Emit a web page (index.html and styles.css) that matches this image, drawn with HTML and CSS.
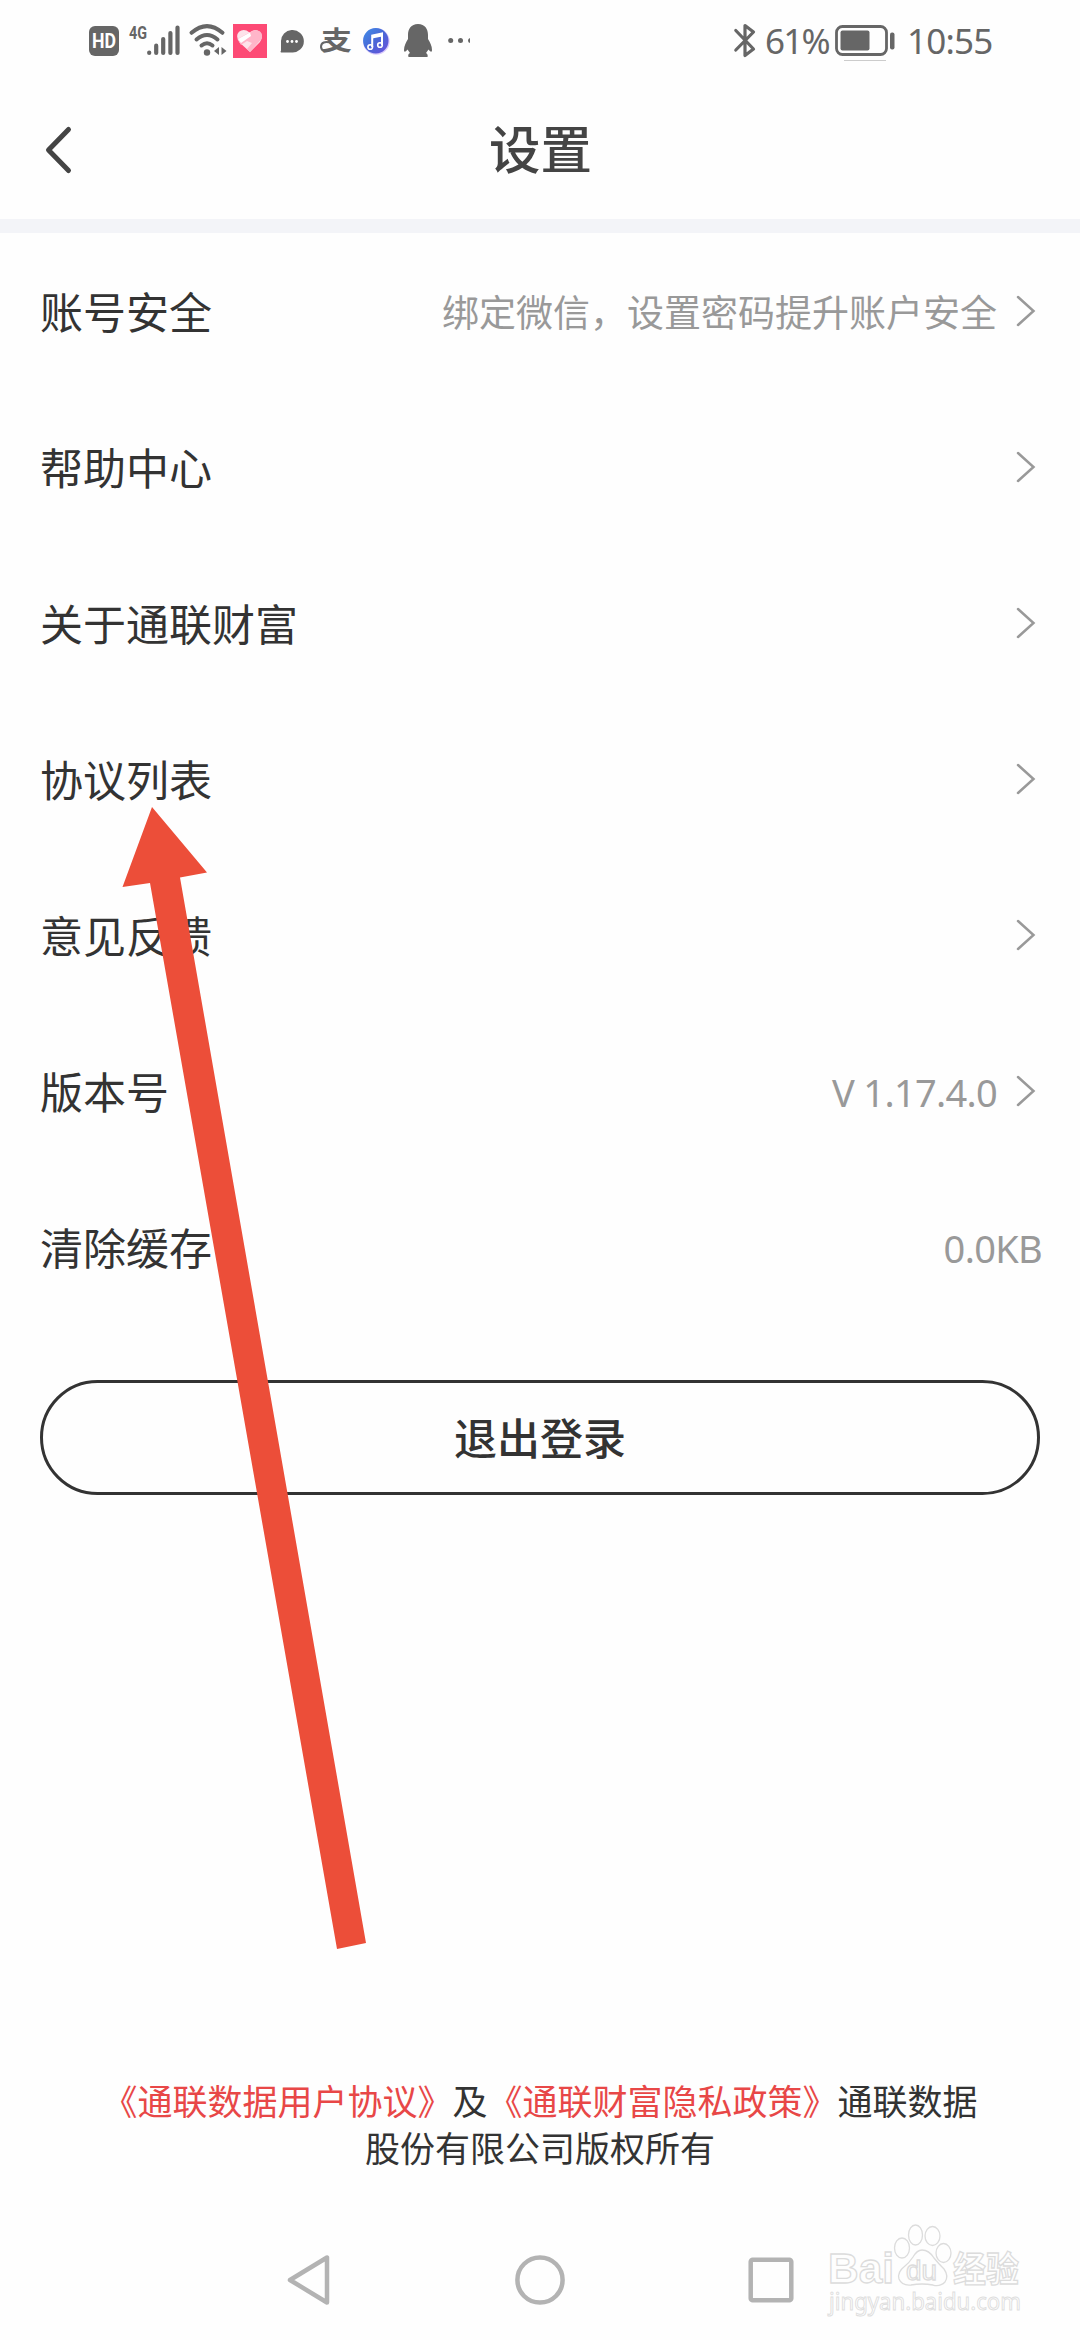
FILE: index.html
```html
<!DOCTYPE html>
<html lang="zh-CN">
<head>
    <meta charset="UTF-8">
    <meta name="viewport" content="width=device-width, initial-scale=1.0">
    <title>设置</title>
    <link rel="stylesheet" href="styles.css">
</head>
<body>
    <div class="screen">
        <!-- Status bar -->
        <div class="status-bar">
            <div class="status-left">
                <svg class="icon-hd" width="30" height="36" viewBox="0 0 30 36">
                    <rect x="0" y="3" width="30" height="30" rx="6" fill="#666"/>
                    <text x="15" y="25" text-anchor="middle" textLength="24" lengthAdjust="spacingAndGlyphs" class="hd-text">HD</text>
                </svg>
                <svg class="icon-signal" width="51" height="36" viewBox="0 0 51 36">
                    <text x="0" y="15.500" textLength="18" lengthAdjust="spacingAndGlyphs" class="net-text">4G</text>
                    <g stroke="#666" stroke-width="4.200" stroke-linecap="round">
                        <path d="M20.200 29.500v.5M27.200 22.700v7.200M34.200 16v14M41.400 10v20M48.500 4.500v25.500"/>
                    </g>
                </svg>
                <svg class="icon-wifi" width="38" height="36" viewBox="0 0 38 36">
                    <g fill="none" stroke="#666" stroke-width="4" stroke-linecap="round">
                        <path d="M2.500 9.800q15.500-13.500 31 0"/>
                        <path d="M7.500 16.500q10.500-9 21 0"/>
                        <path d="M12.500 22.500q5.500-4.500 11 0"/>
                    </g>
                    <circle cx="18" cy="29.500" r="3.200" fill="#666"/>
                    <path d="M30 24v8l-5-4zM32.500 24v8l5-4z" fill="#666"/>
                </svg>
                <svg class="icon-heart" width="34" height="36" viewBox="0 0 34 36">
                    <rect y="1" width="34" height="34" fill="#fd4a75"/>
                    <path d="M17 29L6.500 19.500Q2 13 6 8.800 11 5 16.500 9.500 22 5 26.500 8.500 31 13 27 19z" fill="#fde3ea"/>
                    <path d="M4.500 16L16.500 9.500 22 7q9 1 6.500 9L17 29l-3-3 5-6-5-2-6 4z" fill="#ffb5c9"/>
                    <path d="M17 9.500l-12 6.500 3 4 10-7z" fill="#fff"/>
                </svg>
                <svg class="icon-chat" width="23" height="36" viewBox="0 0 23 36">
                    <path d="M11.500 7A11.300 11.300 0 1 1 11.500 29.500H1q-1-.5 0-2V18A11 11 0 0 1 11.500 7z" fill="#666"/>
                    <g fill="#fff">
                        <circle cx="7.500" cy="18.500" r="1.400"/>
                        <circle cx="12" cy="18.500" r="1.400"/>
                        <circle cx="16.500" cy="18.500" r="1.400"/>
                    </g>
                </svg>
                <svg class="icon-pay" width="32" height="36" viewBox="0 0 32 36">
                    <text x="1" y="27" textLength="31" lengthAdjust="spacingAndGlyphs" class="pay-text">支</text>
                    <path d="M12 20q-11-3-11 4 1 6 9 3" fill="none" stroke="#666" stroke-width="2"/>
                </svg>
                <svg class="icon-music" width="28" height="36" viewBox="0 0 28 36">
                    <defs>
                        <linearGradient id="music" x1="0" y1="0" x2="1" y2="1">
                            <stop offset="0" stop-color="#3f8ee8"/>
                            <stop offset=".5" stop-color="#4a67d6"/>
                            <stop offset="1" stop-color="#6a50dc"/>
                        </linearGradient>
                    </defs>
                    <circle cx="14.300" cy="18.400" r="13.300" fill="#d8c9fa"/>
                    <circle cx="13.800" cy="17.800" r="12.700" fill="url(#music)"/>
                    <path d="M10.200 24V12.500l9.800-2V22" fill="none" stroke="#fff" stroke-width="2"/>
                    <path d="M10.200 12.500l9.800-2v3l-9.800 2z" fill="#fff"/>
                    <circle cx="8.200" cy="24" r="2.300" fill="none" stroke="#fff" stroke-width="1.600"/>
                    <circle cx="18" cy="22" r="2.300" fill="none" stroke="#fff" stroke-width="1.600"/>
                </svg>
                <svg class="icon-qq" width="28" height="36" viewBox="0 0 28 36">
                    <path d="M14 1C7 1 4 6 4 12v4c-2 3-4 7-4 11 0 2 1 2.500 3.500-.500L6 30c-2 1-2 2-1.500 4H23.500c.5-2 0-3-1.500-4l2.500-3.500C27 29.500 28 29 28 27c0-4-2-8-4-11v-4C24 6 21 1 14 1z" fill="#666"/>
                </svg>
                <svg class="icon-more" width="23" height="36" viewBox="0 0 23 36">
                    <g fill="#666">
                        <circle cx="2.700" cy="17.500" r="2.500"/>
                        <circle cx="12.500" cy="17.500" r="2.500"/>
                        <path d="M22 15v5q-2-.5-2-2.500t2-2.500z"/>
                    </g>
                </svg>
            </div>
            <div class="status-right">
                <svg width="22" height="36" viewBox="0 0 22 36">
                    <path d="M1.800 7.500L19.500 26l-8.500 6.500V2.500L19.500 9 1.800 27" fill="none" stroke="#666" stroke-width="3.200" stroke-linecap="round" stroke-linejoin="round"/>
                </svg>
                <span class="status-text battery-text">61%</span>
                <svg class="icon-battery" width="60" height="40" viewBox="0 0 60 40">
                    <rect x="1.500" y="5.500" width="50" height="28" rx="6" fill="none" stroke="#666" stroke-width="2.800"/>
                    <rect x="5.500" y="9.500" width="29" height="20" rx="2" fill="#666"/>
                    <rect x="55" y="11.500" width="4.500" height="17" rx="2" fill="#666"/>
                    <path d="M9 39.500h42" stroke="#ccc"/>
                </svg>
                <span class="status-text time-text">10:55</span>
            </div>
        </div>

        <!-- Title bar -->
        <header class="title-bar">
            <svg class="back" width="28" height="52" viewBox="0 0 28 52">
                <path d="M25.500 4.500L5.500 25l20 20.500" fill="none" stroke="#444" stroke-width="5" stroke-linecap="round" stroke-linejoin="round"/>
            </svg>
            <h1>设置</h1>
        </header>

        <!-- Settings list -->
        <ul class="settings">
            <li class="row">
                <span class="label">账号安全</span>
                <span class="value">绑定微信，设置密码提升账户安全</span>
                <svg class="chevron" viewBox="0 0 20 32"><path d="M2 2l15.500 14L2 30"/></svg>
            </li>
            <li class="row">
                <span class="label">帮助中心</span>
                <svg class="chevron" viewBox="0 0 20 32"><path d="M2 2l15.500 14L2 30"/></svg>
            </li>
            <li class="row">
                <span class="label">关于通联财富</span>
                <svg class="chevron" viewBox="0 0 20 32"><path d="M2 2l15.500 14L2 30"/></svg>
            </li>
            <li class="row">
                <span class="label">协议列表</span>
                <svg class="chevron" viewBox="0 0 20 32"><path d="M2 2l15.500 14L2 30"/></svg>
            </li>
            <li class="row">
                <span class="label">意见反馈</span>
                <svg class="chevron" viewBox="0 0 20 32"><path d="M2 2l15.500 14L2 30"/></svg>
            </li>
            <li class="row">
                <span class="label">版本号</span>
                <span class="value latin">V 1.17.4.0</span>
                <svg class="chevron" viewBox="0 0 20 32"><path d="M2 2l15.500 14L2 30"/></svg>
            </li>
            <li class="row">
                <span class="label">清除缓存</span>
                <span class="value latin size">0.0KB</span>
            </li>
        </ul>

        <button class="logout">退出登录</button>

        <footer class="copyright">
            <a>《通联数据用户协议》</a>及<a>《通联财富隐私政策》</a>通联数据<br>股份有限公司版权所有
        </footer>

        <!-- System navigation -->
        <nav class="nav-bar">
            <svg width="46" height="54" viewBox="0 0 46 54">
                <path d="M41 4.500v45L4 27z" fill="none" stroke="#b3b3b3" stroke-width="4.500" stroke-linejoin="round"/>
            </svg>
            <svg width="50" height="54" viewBox="0 0 50 54">
                <circle cx="25" cy="27" r="22.600" fill="none" stroke="#b3b3b3" stroke-width="4.500"/>
            </svg>
            <svg width="46" height="54" viewBox="0 0 46 54">
                <rect x="2.700" y="6.700" width="40.600" height="40.600" rx="2" fill="none" stroke="#b3b3b3" stroke-width="4.500"/>
            </svg>
        </nav>

        <!-- Pointer arrow -->
        <svg class="arrow" width="250" height="1152" viewBox="0 0 250 1152">
            <path d="M32 7L87 72.500l-27 5L246 1143l-29 6L30 83 2.500 87z" fill="#ec4e39"/>
        </svg>

        <!-- Watermark -->
        <svg class="watermark" width="204" height="100" viewBox="0 0 204 100">
            <g class="wm-shape">
                <text x="8" y="63" textLength="66" lengthAdjust="spacingAndGlyphs" class="wm-bai">Bai</text>
                <ellipse cx="82" cy="28" rx="7.500" ry="10"/>
                <ellipse cx="95.500" cy="15" rx="7" ry="10"/>
                <ellipse cx="112.500" cy="16" rx="7.500" ry="9.500"/>
                <ellipse cx="123.500" cy="33" rx="7.500" ry="9.500"/>
                <path d="M102 30q7 0 12 8 4 5 10 11 5 7 1 13-5 5-12 3-11-2-22 0-9 1-12-6-2-7 6-13 4-3 8-9 4-7 9-7z"/>
                <text x="86" y="60" textLength="31" lengthAdjust="spacingAndGlyphs" class="wm-du">du</text>
                <text x="133" y="62" textLength="66" lengthAdjust="spacingAndGlyphs" class="wm-cn">经验</text>
            </g>
            <text x="9" y="90" textLength="192" lengthAdjust="spacingAndGlyphs" class="wm-url">jingyan.baidu.com</text>
        </svg>
    </div>
</body>
</html>
```
FILE: styles.css
```css
* {
    box-sizing: border-box;
}

body {
    margin: 0;
    background-color: #fefefe;
    color: #333;
    font-family: "Noto Sans CJK SC", sans-serif;
}

.screen {
    position: relative;
    display: flex;
    flex-direction: column;
    width: 1080px;
    height: 2340px;
    overflow: hidden;
}

svg {
    display: block;
    flex: none;
    overflow: visible;
}

/* Status bar */
.status-bar {
    display: flex;
    justify-content: space-between;
    height: 82px;
    padding: 0 88px 0 89px;
    align-items: center;
}

.status-left,
.status-right {
    display: flex;
    align-items: center;
}

.icon-signal {
    margin-left: 10px;
}

.icon-wifi {
    margin-left: 9px;
}

.icon-heart {
    margin-left: 6px;
}

.icon-chat {
    margin-left: 13px;
}

.icon-pay {
    margin-left: 17px;
}

.icon-music {
    margin-left: 10px;
}

.icon-qq {
    margin-left: 14px;
}

.icon-more {
    margin-left: 16px;
}

.hd-text {
    font: bold 20px Roboto, sans-serif;
    fill: #fff;
}

.net-text {
    font: bold 19px Roboto, sans-serif;
    fill: #666;
}

.pay-text {
    font: bold 26px "Noto Sans CJK SC", sans-serif;
    fill: #666;
}

.status-text {
    font-family: "Noto Sans", sans-serif;
    font-size: 35px;
    line-height: 40px;
    color: #666;
    white-space: nowrap;
}

.battery-text {
    width: 64px;
    margin-left: 9px;
    letter-spacing: -1.8px;
}

.icon-battery {
    margin-left: 6px;
}

.time-text {
    width: 85px;
    margin-left: 12px;
    letter-spacing: -0.8px;
}

/* Title bar */
.title-bar {
    display: grid;
    grid-template-columns: 1fr auto 1fr;
    align-items: center;
    height: 151px;
    padding: 0 42px 0 43px;
    border-bottom: 14px solid #f3f4f8;
}

.title-bar h1 {
    margin: 0 0 7px;
    font-size: 51.5px;
    font-weight: 500;
    line-height: 76px;
    color: #444;
}

/* Settings list */
.settings {
    margin: 0;
    padding: 0;
    list-style: none;
}

.row {
    display: flex;
    align-items: center;
    height: 156px;
    padding: 0 44px 0 40px;
}

.label {
    flex: 1;
    padding-bottom: 2px;
    font-size: 43px;
}

.value {
    font-size: 37px;
    color: #999;
}

.latin {
    padding-top: 2px;
    font-family: "Noto Sans", sans-serif;
    font-size: 38px;
    letter-spacing: -0.7px;
}

.size {
    margin-right: -6px;
}

.chevron {
    width: 20px;
    height: 32px;
    margin-left: 19px;
    fill: none;
    stroke: #999;
    stroke-width: 2.5;
    stroke-linecap: round;
}

.logout {
    height: 115px;
    margin: 55px 40px 0;
    padding: 0 0 3px;
    border: 3px solid #333;
    border-radius: 58px;
    background: none;
    color: #333;
    font-family: inherit;
    font-size: 43px;
    font-weight: 500;
}

.copyright {
    margin-top: auto;
    padding-bottom: 50px;
    font-size: 35px;
    line-height: 47px;
    text-align: center;
}

.copyright a {
    color: #e84747;
}

/* System navigation */
.nav-bar {
    display: flex;
    gap: 183px;
    align-items: center;
    height: 120px;
    padding-left: 286px;
}

/* Overlays */
.arrow {
    position: absolute;
    left: 120px;
    top: 800px;
}

.watermark {
    position: absolute;
    left: 820px;
    top: 2220px;
}

.wm-shape {
    fill: #fefefe;
    stroke: #dcdcdc;
    stroke-width: 1.3;
}

.wm-bai {
    font: bold 43px "Liberation Sans", sans-serif;
}

.wm-du {
    font: 28px "Liberation Sans", sans-serif;
}

.wm-cn {
    font: bold 35px "Noto Sans CJK SC", sans-serif;
}

.wm-url {
    font: 24px "Noto Sans", sans-serif;
    fill: #fefefe;
    stroke: #dedede;
    stroke-width: 1;
}
```
